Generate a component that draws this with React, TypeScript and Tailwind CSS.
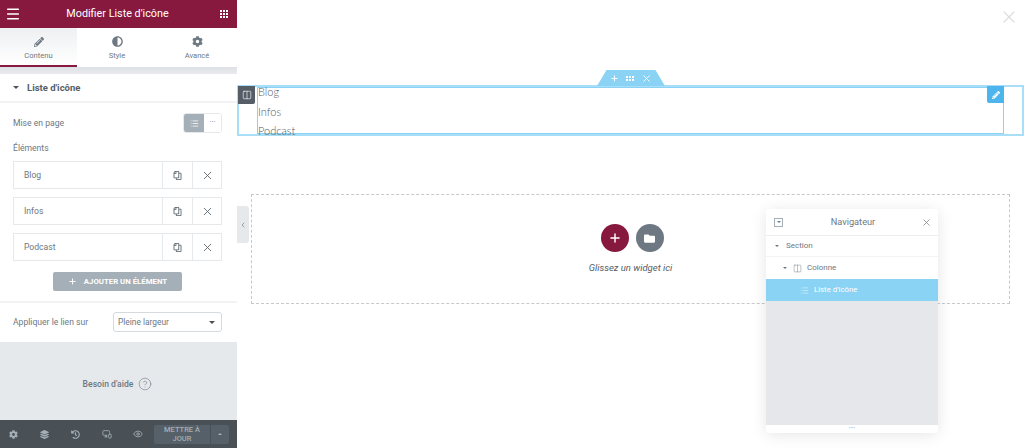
import { ChevronLeft, Eye, List, Menu, MonitorSmartphone, Plus, X, Columns2, CircleHelp } from 'lucide-react';
import { FaAdjust, FaCog, FaFolder, FaHistory, FaLayerGroup, FaPencilAlt, FaRegCopy } from 'react-icons/fa';

const rows = ['Blog', 'Infos', 'Podcast'];

function Dots({ rowsCount, size, className }: { rowsCount: number; size: number; className?: string }) {
  const step = size + 1;
  const cells = [];
  for (let r = 0; r < rowsCount; r++) {
    for (let c = 0; c < 3; c++) {
      cells.push(<rect key={`${r}-${c}`} x={c * step} y={r * step} width={size} height={size} fill="currentColor" />);
    }
  }
  return (
    <svg width={step * 3 - 1} height={step * rowsCount - 1} className={className}>
      {cells}
    </svg>
  );
}

function Tab({ label, active, icon, className }: { label: string; active?: boolean; icon: React.ReactNode; className: string }) {
  return (
    <div className={`flex flex-col items-center pt-[7px] h-[39px] ${className} ${active ? 'border-b-[2px] border-[#87193f] bg-gradient-to-b from-[#eef0f2] to-white' : ''}`}>
      <div className="h-[13px] text-[#6d7882] flex items-center">{icon}</div>
      <div className="text-[7.6px] leading-[10px] mt-[3px] text-[#6d7882]">{label}</div>
    </div>
  );
}

function Sidebar() {
  return (
    <div className="w-[237px] h-[448px] shrink-0 bg-[#e6e9ec] flex flex-col text-[#6d7882]">
      <header className="h-[28px] bg-[#87193f] text-white flex items-center justify-between pl-[5px] pr-[9px] shrink-0">
        <Menu size={16} strokeWidth={2.2} />
        <span className="text-[10.8px] pr-[6px]">Modifier Liste d'icône</span>
        <Dots rowsCount={3} size={2} />
      </header>

      <div className="h-[39px] flex bg-white shrink-0">
        <Tab label="Contenu" active className="w-[77px]" icon={<FaPencilAlt size={10} />} />
        <Tab label="Style" className="w-[80px]" icon={<FaAdjust size={11} />} />
        <Tab label="Avancé" className="flex-1" icon={<FaCog size={11} />} />
      </div>

      <div className="h-[7px] bg-gradient-to-b from-[#dde0e4] to-[#e9ebee] shrink-0" />

      <div className="bg-white shrink-0">
        <div className="h-[29px] flex items-center px-[13px] border-b-[2px] border-[#f1f3f5]">
          <div className="w-0 h-0 border-x-[3px] border-x-transparent border-t-[3px] border-t-[#495157]" />
          <span className="ml-[8px] pt-[1px] text-[9.5px] font-bold text-[#556068]">Liste d'icône</span>
        </div>

        <div className="pl-[13px] pr-[15px] pt-[10px]">
          <div className="h-[20px] flex items-center justify-between">
            <span className="text-[8.6px] pt-[1px]">Mise en page</span>
            <div className="flex w-[39px] h-[20px] rounded-[3px] overflow-hidden border border-[#e6e9ec]">
              <div className="w-[20px] bg-[#a4afb7] text-white flex items-center justify-center"><List size={9} /></div>
              <div className="flex-1 bg-white flex items-center justify-center text-[#6d7882] text-[8px] leading-none pb-[3px]">···</div>
            </div>
          </div>

          <div className="text-[8.6px] leading-[12px] mt-[9px]">Éléments</div>

          <div className="mt-[7px] flex flex-col gap-[8px] w-[209px]">
            {rows.map((r) => (
              <div key={r} className="h-[28px] flex border border-[#e6e9ec] text-[8.6px]">
                <div className="flex-1 pl-[10px] flex items-center">{r}</div>
                <div className="w-[30px] border-l border-[#e6e9ec] flex items-center justify-center text-[#556068]"><FaRegCopy size={9} className="-scale-x-100" /></div>
                <div className="w-[29px] border-l border-[#e6e9ec] flex items-center justify-center text-[#556068]"><X size={13} strokeWidth={1.6} /></div>
              </div>
            ))}
          </div>

          <div className="mt-[11px] flex justify-center">
            <div className="w-[129px] h-[19px] bg-[#a4afb7] rounded-[2px] text-white flex items-center justify-center text-[7.8px] font-bold">
              <Plus size={9} className="mr-[7px]" strokeWidth={2.5} />
              AJOUTER UN ÉLÉMENT
            </div>
          </div>
        </div>

        <div className="mt-[10px] border-t-[2px] border-[#f1f3f5] pl-[13px] pr-[15px] pt-[9px] pb-[10px] flex items-center justify-between">
          <span className="text-[8.6px]">Appliquer le lien sur</span>
          <div className="w-[109px] h-[20px] border border-[#d5dadf] rounded-[3px] flex items-center justify-between pl-[4px] pr-[6px] text-[8.4px]">
            Pleine largeur
            <div className="w-0 h-0 border-x-[3px] border-x-transparent border-t-[3px] border-t-[#495157]" />
          </div>
        </div>
      </div>

      <div className="flex-1 flex items-center justify-center pr-[2px] pt-[6px] text-[8.6px] font-medium text-[#6d7882] gap-[5px]">
        Besoin d'aide
        <CircleHelp size={14} strokeWidth={1} />
      </div>

      <footer className="h-[28px] bg-[#495157] flex items-center pl-[9px] pr-[7px] text-[#a4afb7] shrink-0">
        <div className="flex w-[145px] items-center">
          <div className="w-[31px]"><FaCog size={9} /></div>
          <div className="w-[31px]"><FaLayerGroup size={9} /></div>
          <div className="w-[31px]"><FaHistory size={9} /></div>
          <div className="w-[31px]"><MonitorSmartphone size={10} /></div>
          <div className="w-[21px]"><Eye size={10} /></div>
        </div>
        <div className="w-[76px] h-[19px] bg-[#556068] rounded-[2px] flex items-center mr-[1px] ml-auto">
          <div className="flex-1 text-center text-[7.5px] leading-[9px] font-medium border-r border-[#495157] h-full flex items-center justify-center">METTRE À<br />JOUR</div>
          <div className="w-[18px] flex justify-center">
            <div className="w-0 h-0 border-x-[2.5px] border-x-transparent border-b-[2.5px] border-b-[#a4afb7]" />
          </div>
        </div>
      </footer>
    </div>
  );
}

function Navigator() {
  return (
    <div className="absolute left-[529px] top-[209px] w-[172px] h-[224px] bg-white rounded-[3px] shadow-[0_2px_15px_rgba(0,0,0,0.1)] flex flex-col text-[#6d7882]">
      <div className="h-[27px] flex items-center justify-between pl-[8px] pr-[6px] border-b border-[#eceef0] shrink-0">
        <div className="w-[9px] h-[9px] border border-[#a4afb7] flex items-center justify-center">
          <div className="w-0 h-0 border-x-[2px] border-x-transparent border-t-[2px] border-t-[#6d7882]" />
        </div>
        <span className="text-[9.2px] leading-none pl-[2px]">Navigateur</span>
        <X size={11} strokeWidth={1.5} />
      </div>
      <div className="h-[21px] flex items-center pl-[9px] text-[8px] border-b border-[#f1f3f5] shrink-0">
        <div className="w-0 h-0 border-x-[2.5px] border-x-transparent border-t-[2.5px] border-t-[#6d7882] mr-[7px]" />
        Section
      </div>
      <div className="h-[22px] flex items-center pl-[17px] text-[8px] shrink-0">
        <div className="w-0 h-0 border-x-[2.5px] border-x-transparent border-t-[2.5px] border-t-[#6d7882] mr-[6px]" />
        <Columns2 size={9} strokeWidth={1.2} className="mr-[5px]" />
        Colonne
      </div>
      <div className="h-[22px] bg-[#8ad3f4] text-white flex items-center pl-[34px] text-[7.8px] shrink-0">
        <List size={9} strokeWidth={1.2} className="mr-[5px]" />
        Liste d'icône
      </div>
      <div className="flex-1 bg-[#e6e7eb]" />
      <div className="h-[8px] flex items-center justify-center text-[#a4afb7] text-[7px] leading-none pb-[1px] font-bold shrink-0">···</div>
    </div>
  );
}

function Canvas() {
  return (
    <main className="relative flex-1 h-[448px] bg-white pt-[85px]">
      <div className="absolute right-[5px] top-[7px] text-[#dcdfe2]"><X size={20} strokeWidth={1.5} /></div>

      <div className="absolute left-0 top-[206px] w-[12px] h-[37px] bg-[#e6e9ec] rounded-r-[3px] flex items-center justify-center text-[#6d7882]">
        <ChevronLeft size={8} strokeWidth={2} />
      </div>

      <section className="relative h-[51px] border-[2px] border-[#a8def7] pl-[18px] pr-[18px]">
        <div className="absolute left-[358px] -top-[17px] w-[68px] h-[16px] bg-[#8ad3f4] [clip-path:polygon(14%_0,86%_0,100%_100%,0_100%)] text-white flex items-center justify-center gap-[7px]">
          <Plus size={9} strokeWidth={2.5} />
          <Dots rowsCount={2} size={2} />
          <X size={11} strokeWidth={2} />
        </div>
        <div className="absolute -left-[1px] -top-[1px] w-[17px] h-[18px] bg-[#555d66] rounded-br-[2px] text-white flex items-center justify-center">
          <Columns2 size={10} strokeWidth={1.5} />
        </div>
        <div className="relative h-full border-x border-b border-t border-[#8ad3f4] font-['Lato',sans-serif] font-light text-[11px] leading-[19.5px] text-[#54595f] overflow-visible">
          <div className="absolute -right-px -top-[2px] w-[17px] h-[17px] bg-[#4db5ee] rounded-bl-[2px] text-white flex items-center justify-center">
            <FaPencilAlt size={8} />
          </div>
          <div className="-mt-[6px]">Blog</div>
          <div>Infos</div>
          <div>Podcast</div>
        </div>
      </section>

      <section className="mx-[14px] mt-[58px] h-[110px] border border-dashed border-[#c6c9cc] flex flex-col items-center pt-[29px]">
        <div className="flex gap-[7px] pl-[3px]">
          <div className="w-[28px] h-[28px] rounded-full bg-[#87193f] text-white flex items-center justify-center"><Plus size={14} strokeWidth={2.5} /></div>
          <div className="w-[28px] h-[28px] rounded-full bg-[#6d7882] text-white flex items-center justify-center"><FaFolder size={11} /></div>
        </div>
        <div className="mt-[9px] text-[9.5px] italic text-[#555d66]">Glissez un widget ici</div>
      </section>

      <Navigator />
    </main>
  );
}

export default function App() {
  return (
    <div className="w-[1024px] h-[448px] flex overflow-hidden font-['Roboto',sans-serif] bg-white">
      <Sidebar />
      <Canvas />
    </div>
  );
}
